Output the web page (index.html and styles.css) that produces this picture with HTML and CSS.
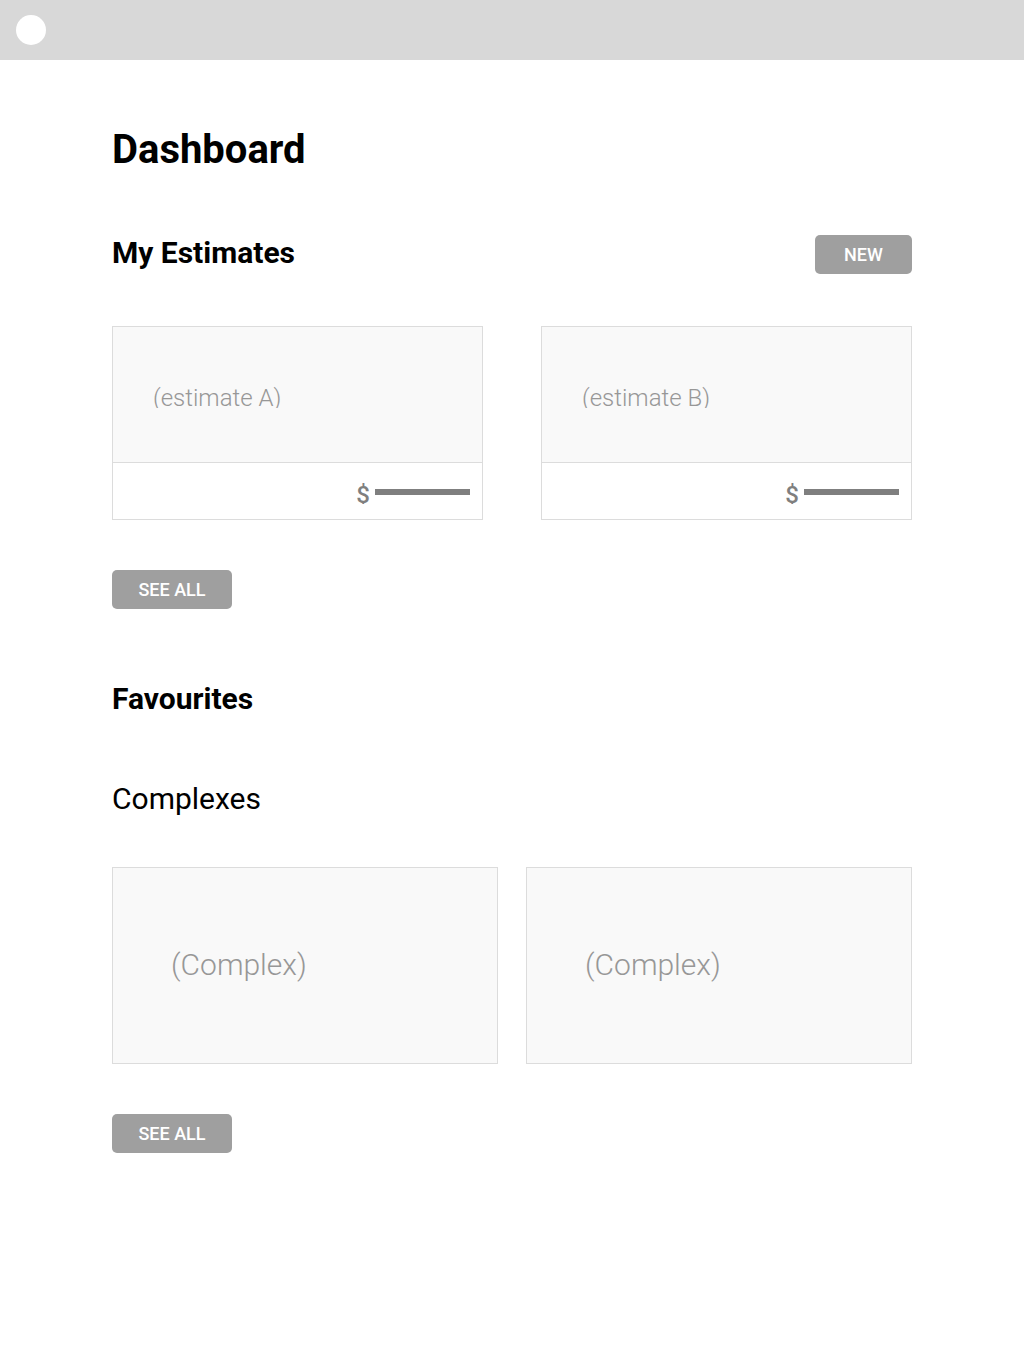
FILE: index.html
```html
<!DOCTYPE html>
<html lang="en">
<head>
<meta charset="utf-8">
<meta name="viewport" content="width=device-width, initial-scale=1">
<title>Dashboard</title>
<link rel="stylesheet" href="styles.css">
</head>
<body>
<header class="topbar"><span class="avatar"></span></header>
<main class="page">
  <h1 class="title">Dashboard</h1>
  <section class="estimates">
    <div class="section-head">
      <h2 class="heading">My Estimates</h2>
      <button class="button button-new" type="button">NEW</button>
    </div>
    <div class="estimate-grid">
      <article class="estimate">
        <div class="estimate-name"><span class="clip">(estimate A)</span></div>
        <div class="estimate-total"><span class="currency">$</span><span class="amount"></span></div>
      </article>
      <article class="estimate">
        <div class="estimate-name"><span class="clip">(estimate B)</span></div>
        <div class="estimate-total"><span class="currency">$</span><span class="amount"></span></div>
      </article>
    </div>
    <button class="button" type="button">SEE ALL</button>
  </section>
  <section class="favourites">
    <h2 class="heading">Favourites</h2>
    <h3 class="subheading">Complexes</h3>
    <div class="complex-grid">
      <article class="complex">(Complex)</article>
      <article class="complex">(Complex)</article>
    </div>
    <button class="button" type="button">SEE ALL</button>
  </section>
</main>
</body>
</html>
```
FILE: styles.css
```css
* {
  box-sizing: border-box;
}

body {
  margin: 0;
  background: #fff;
  color: #000;
  font-family: Roboto, sans-serif;
}

.topbar {
  display: flex;
  align-items: center;
  height: 60px;
  padding: 0 16px;
  background: #d8d8d8;
}

.avatar {
  width: 30px;
  height: 30px;
  border-radius: 50%;
  background: #fff;
}

.page {
  max-width: 1024px;
  margin: 0 auto;
  padding: 65px 112px;
}

.title {
  margin: 0;
  font-size: 40px;
  line-height: 50px;
  font-weight: 700;
}

.estimates {
  margin-top: 60px;
}

.section-head {
  display: flex;
  align-items: flex-start;
  justify-content: space-between;
}

.heading,
.subheading {
  margin: 0;
  font-size: 30px;
  line-height: 36px;
  font-weight: 700;
}

.subheading {
  margin-top: 64px;
  font-weight: 400;
}

.button {
  display: block;
  width: 120px;
  height: 39px;
  padding: 0;
  border: 0;
  border-radius: 5px;
  background: #9f9f9f;
  color: #fff;
  font-family: inherit;
  font-size: 18px;
  line-height: 39px;
  font-weight: 500;
  -webkit-font-smoothing: antialiased;
}

.button-new {
  width: 97px;
}

.estimate-grid,
.complex-grid {
  display: grid;
  grid-template-columns: 1fr 1fr;
  margin: 52px 0 50px;
}

.estimate-grid {
  gap: 58px;
}

.complex-grid {
  gap: 28px;
  margin-top: 50px;
}

.estimate {
  border: 1px solid #dcdcdc;
}

.estimate-name {
  height: 136px;
  padding: 56px 40px 0;
  border-bottom: 1px solid #dcdcdc;
  background: #f9f9f9;
  color: #979797;
  font-size: 24px;
  line-height: 30px;
  font-weight: 300;
}

.clip {
  display: block;
  height: 25px;
  overflow: hidden;
}

.estimate-total {
  display: flex;
  align-items: flex-start;
  justify-content: flex-end;
  gap: 5px;
  height: 56px;
  padding: 17px 12px 0;
  color: #7f7f7f;
  font-size: 24px;
  line-height: 30px;
  font-weight: 500;
}

.currency {
  height: 24px;
  overflow: hidden;
}

.amount {
  width: 95px;
  height: 6px;
  margin-top: 9px;
  background: #7f7f7f;
}

.favourites {
  margin-top: 72px;
}

.complex {
  padding: 79px 58px 81px;
  border: 1px solid #dcdcdc;
  background: #f9f9f9;
  color: #979797;
  font-size: 30px;
  line-height: 35px;
  font-weight: 300;
}
```
